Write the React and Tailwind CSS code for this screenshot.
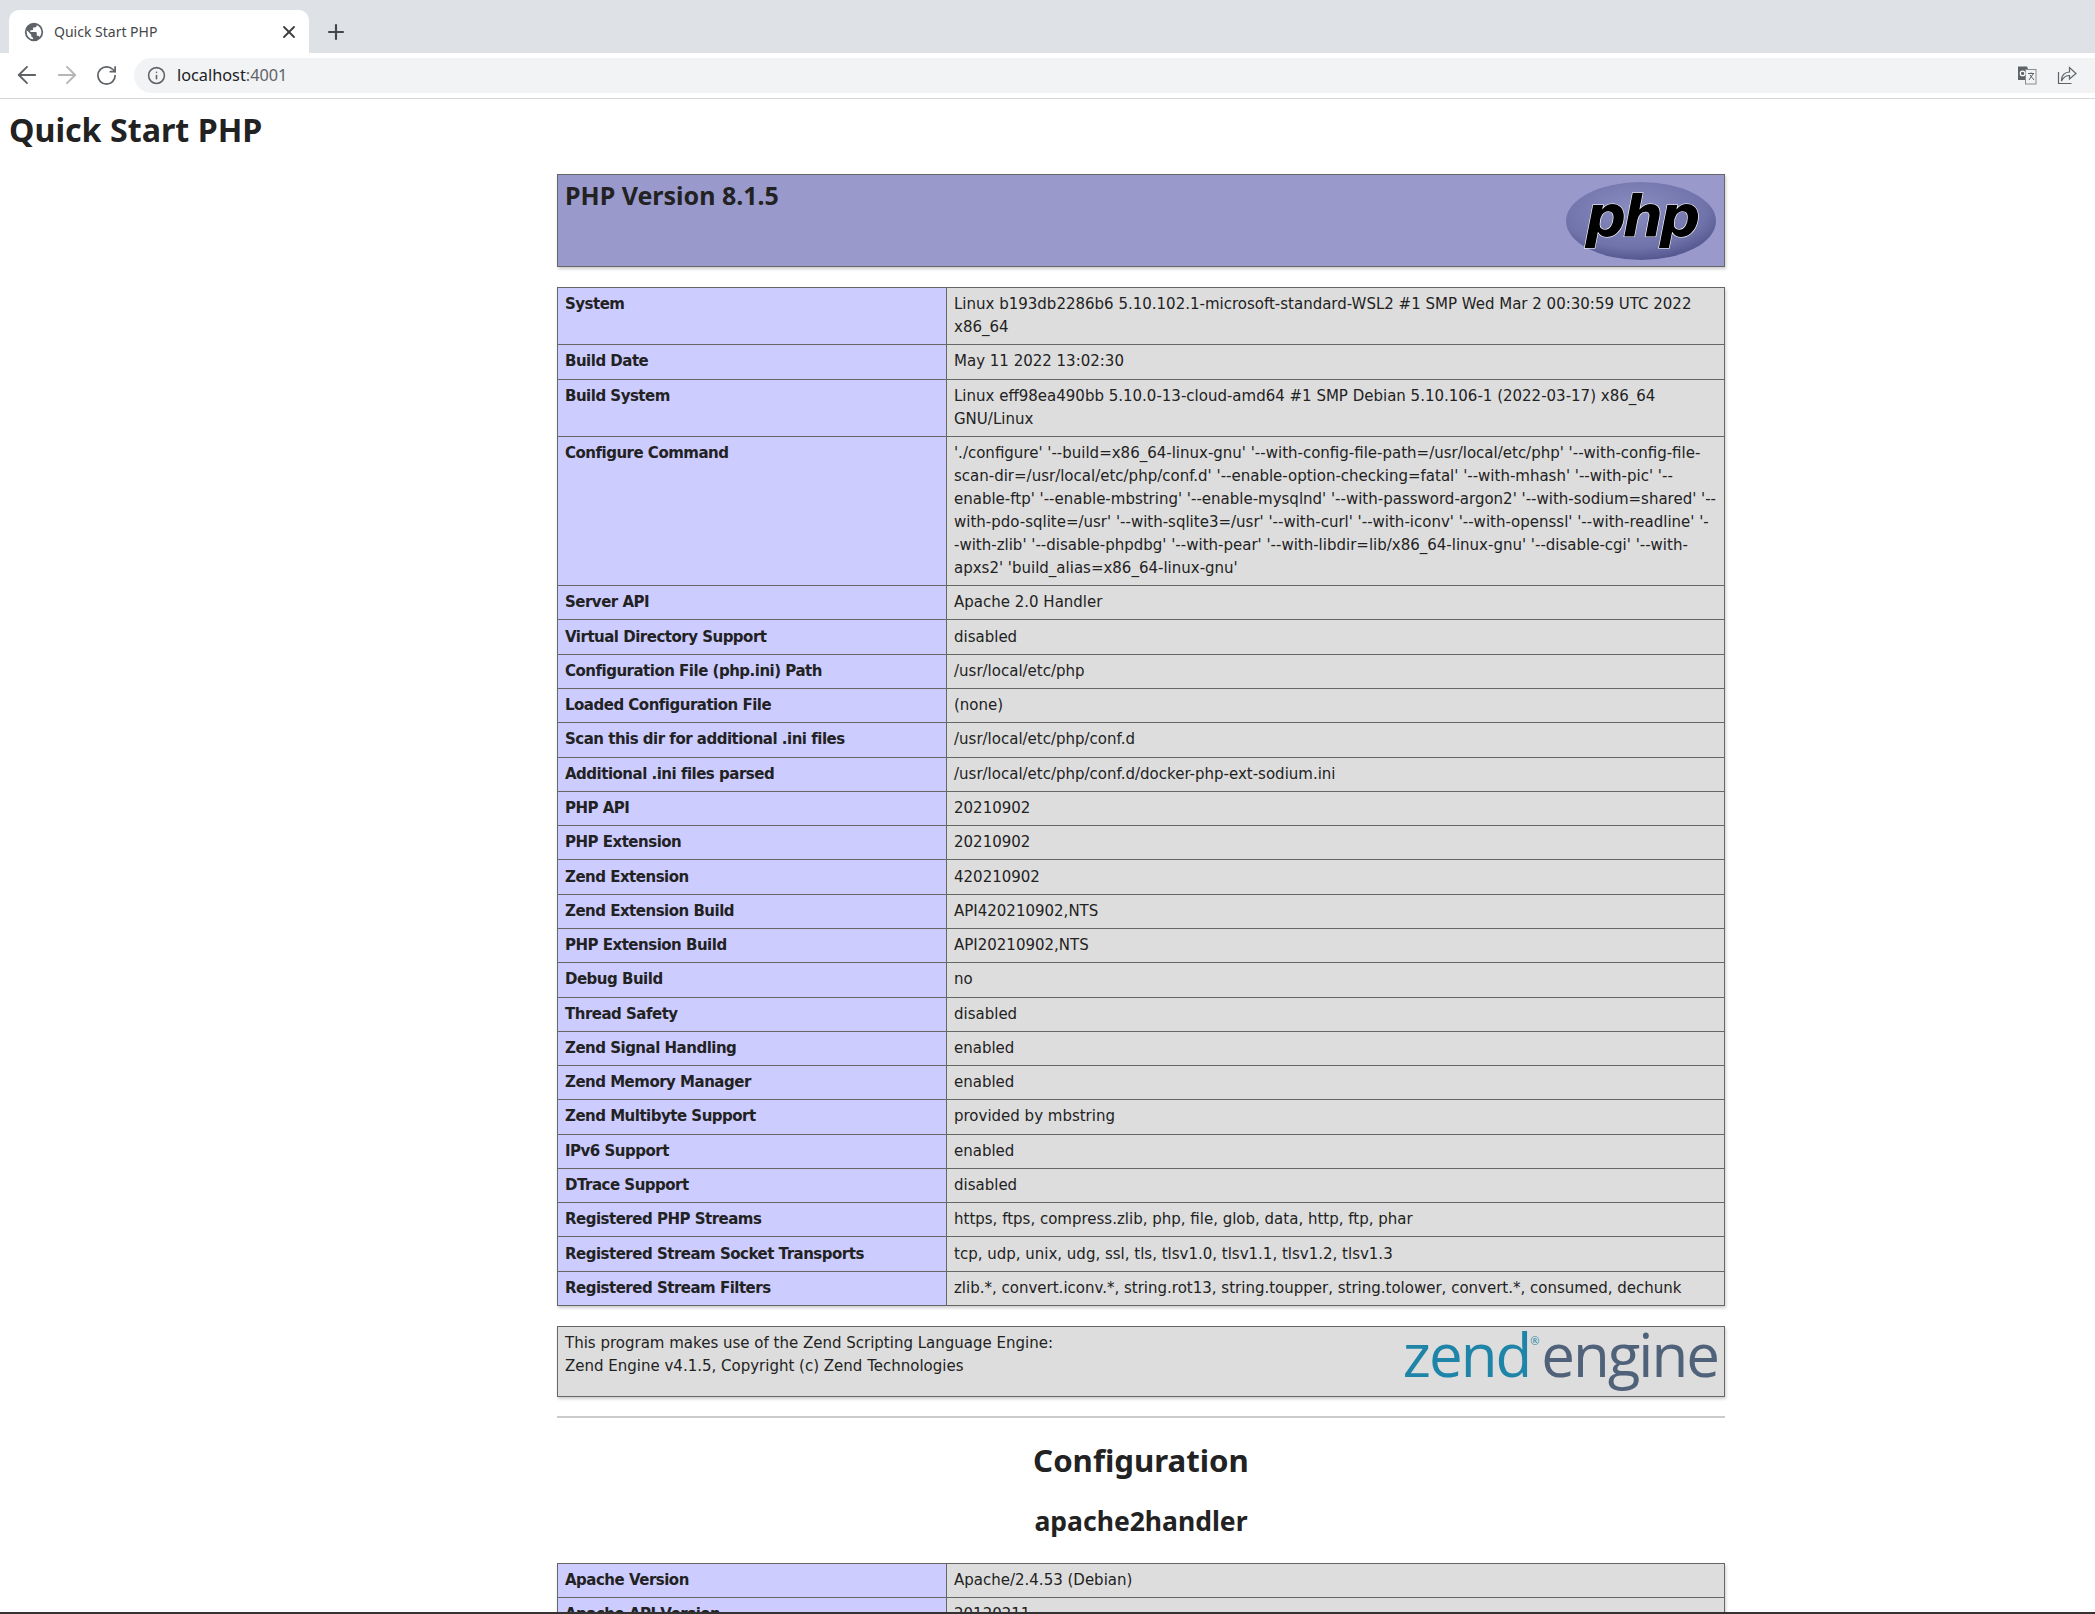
import React from 'react';
import { ArrowLeft, ArrowRight, RotateCw, Info, Plus, X } from 'lucide-react';

const mainRows = [
  ['System', ['Linux b193db2286b6 5.10.102.1-microsoft-standard-WSL2 #1 SMP Wed Mar 2 00:30:59 UTC 2022', 'x86_64']],
  ['Build Date', ['May 11 2022 13:02:30']],
  ['Build System', ['Linux eff98ea490bb 5.10.0-13-cloud-amd64 #1 SMP Debian 5.10.106-1 (2022-03-17) x86_64', 'GNU/Linux']],
  ['Configure Command', [
    "'./configure' '--build=x86_64-linux-gnu' '--with-config-file-path=/usr/local/etc/php' '--with-config-file-",
    "scan-dir=/usr/local/etc/php/conf.d' '--enable-option-checking=fatal' '--with-mhash' '--with-pic' '--",
    "enable-ftp' '--enable-mbstring' '--enable-mysqlnd' '--with-password-argon2' '--with-sodium=shared' '--",
    "with-pdo-sqlite=/usr' '--with-sqlite3=/usr' '--with-curl' '--with-iconv' '--with-openssl' '--with-readline' '-",
    "-with-zlib' '--disable-phpdbg' '--with-pear' '--with-libdir=lib/x86_64-linux-gnu' '--disable-cgi' '--with-",
    "apxs2' 'build_alias=x86_64-linux-gnu'",
  ]],
  ['Server API', ['Apache 2.0 Handler']],
  ['Virtual Directory Support', ['disabled']],
  ['Configuration File (php.ini) Path', ['/usr/local/etc/php']],
  ['Loaded Configuration File', ['(none)']],
  ['Scan this dir for additional .ini files', ['/usr/local/etc/php/conf.d']],
  ['Additional .ini files parsed', ['/usr/local/etc/php/conf.d/docker-php-ext-sodium.ini']],
  ['PHP API', ['20210902']],
  ['PHP Extension', ['20210902']],
  ['Zend Extension', ['420210902']],
  ['Zend Extension Build', ['API420210902,NTS']],
  ['PHP Extension Build', ['API20210902,NTS']],
  ['Debug Build', ['no']],
  ['Thread Safety', ['disabled']],
  ['Zend Signal Handling', ['enabled']],
  ['Zend Memory Manager', ['enabled']],
  ['Zend Multibyte Support', ['provided by mbstring']],
  ['IPv6 Support', ['enabled']],
  ['DTrace Support', ['disabled']],
  ['Registered PHP Streams', ['https, ftps, compress.zlib, php, file, glob, data, http, ftp, phar']],
  ['Registered Stream Socket Transports', ['tcp, udp, unix, udg, ssl, tls, tlsv1.0, tlsv1.1, tlsv1.2, tlsv1.3']],
  ['Registered Stream Filters', ['zlib.*, convert.iconv.*, string.rot13, string.toupper, string.tolower, convert.*, consumed, dechunk']],
];

const apacheRows = [
  ['Apache Version', ['Apache/2.4.53 (Debian)']],
  ['Apache API Version', ['20120211']],
];

const InfoTable = ({ rows }) => (
  <table className="w-[1168px] table-fixed border-collapse shadow-[1px_2px_3px_rgba(0,0,0,0.2)]">
    <colgroup>
      <col className="w-[389px]" />
      <col />
    </colgroup>
    <tbody>
      {rows.map(([label, lines]) => (
        <tr key={label}>
          <td className="border border-[#666] bg-[#ccf] py-[5.15px] pl-[7px] pr-[6px] align-top font-bold tracking-[-0.5px] whitespace-nowrap">{label}</td>
          <td className="border border-[#666] bg-[#ddd] py-[5.15px] pl-[7px] pr-[6px] align-top whitespace-nowrap">
            {lines.map((line) => <div key={line}>{line}</div>)}
          </td>
        </tr>
      ))}
    </tbody>
  </table>
);

const Toolbar = () => (
  <div className="font-['Noto_Sans',sans-serif]">
    <div className="flex h-[53px] items-end bg-[#dee1e6] pl-[9px]">
      <div className="flex h-[43px] w-[300px] items-center rounded-t-[10px] bg-white pl-[14px] pr-[10px]">
        <svg width="22" height="22" viewBox="0 0 24 24" className="shrink-0">
          <path fill="#5f6368" d="M12 2a10 10 0 1 0 0 20 10 10 0 0 0 0-20zM4 12c0-.6.1-1.2.2-1.8L9 15v1c0 1.1.9 2 2 2v2a8 8 0 0 1-7-8zm13.9 5.4c-.3-.8-1-1.4-1.9-1.4h-1v-3c0-.6-.4-1-1-1H8v-2h2c.6 0 1-.4 1-1V7h2c1.1 0 2-.9 2-2v-.4a8 8 0 0 1 2.9 12.8z" />
        </svg>
        <span className="ml-[9px] flex-1 text-[14px] text-[#45474a]">Quick Start PHP</span>
        <X size={20} strokeWidth={2.2} className="text-[#3c4043]" />
      </div>
      <div className="mb-[9px] ml-[15px] flex h-[24px] items-center">
        <Plus size={24} strokeWidth={2.2} className="text-[#45474a]" />
      </div>
    </div>
    <div className="flex h-[46px] items-center border-b border-[#d8d8d8] bg-white pb-px">
      <ArrowLeft size={28} strokeWidth={1.6} className="ml-[13px] text-[#5f6368]" />
      <ArrowRight size={28} strokeWidth={1.6} className="ml-[12px] text-[#b4b6b8]" />
      <RotateCw size={23} strokeWidth={1.8} className="ml-[13.5px] text-[#5f6368]" />
      <div className="ml-[16.5px] flex h-[35px] flex-1 items-center rounded-l-full bg-[#f1f3f4] pl-[12.5px]">
        <Info size={19} strokeWidth={2} className="text-[#5f6368]" />
        <span className="ml-[11.5px] flex-1 text-[16.3px] text-[#202124]">localhost<span className="text-[#5f6368]">:4001</span></span>
        <svg width="20" height="20" viewBox="0 0 20 20" className="mr-[20px] shrink-0">
          <path d="M1 1.5h9l1 2.5v11H1.5a.5.5 0 0 1-.5-.5z" fill="#5f6368" />
          <rect x="8.500" y="4.500" width="10.500" height="14.500" fill="#f1f3f4" stroke="#8a8d90" />
          <circle cx="5.600" cy="8.400" r="2.300" fill="none" stroke="#fff" strokeWidth="1.200" />
          <path d="M11 8.500h6M14 7.500v1M12 15l4-6M13 10l4 5" stroke="#5f6368" fill="none" />
        </svg>
        <svg width="20" height="20" viewBox="0 0 20 20" className="mr-[18px] shrink-0" fill="none" stroke="#5f6368" strokeWidth="1.2">
          <path d="M1.500 7v11.500h13" />
          <path d="M4.500 15.500c0-5 3-8.500 8-8.500V2.500l6.500 6-6.500 5.500v-3.500c-3 0-6 1.500-8 5.500z" />
        </svg>
      </div>
    </div>
  </div>
);

const PhpLogo = () => (
  <svg width="152" height="80" viewBox="0 0 152 80" className="shrink-0">
    <defs>
      <radialGradient id="phpGlow" cx="45%" cy="35%" r="70%">
        <stop offset="0%" stopColor="#8a8dc0" />
        <stop offset="70%" stopColor="#6f73aa" />
        <stop offset="100%" stopColor="#4d5088" />
      </radialGradient>
    </defs>
    <ellipse cx="76" cy="40" rx="75" ry="39" fill="url(#phpGlow)" />
    <text x="76" y="55" textAnchor="middle" fontFamily="'DejaVu Sans',sans-serif" fontSize="57" fontWeight="700" fontStyle="italic" fill="#000" stroke="#fff" strokeWidth="1.2" paintOrder="stroke" letterSpacing="-3.5">php</text>
  </svg>
);

const ZendLogo = () => (
  <div className="-mt-[10px] flex items-start font-['Open_Sans',sans-serif] text-[60px] leading-[64px] tracking-[-2px]">
    <span className="text-[#1e84a8]">zend</span>
    <span className="mt-[14px] text-[11px] leading-[10px] tracking-normal text-[#1e84a8]">®</span>
    <span className="ml-[2px] text-[#50627a]">engine</span>
  </div>
);

export default function App() {
  return (
    <div className="h-[1614px] overflow-hidden border-b-2 border-[#333] bg-white text-[#222]">
      <Toolbar />
      <div className="font-['DejaVu_Sans',sans-serif] text-[15px] leading-[23px]">
        <h1 className="pl-[9px] pt-[8.5px] font-['Noto_Sans',sans-serif] text-[32.2px] leading-[44px] font-bold">Quick Start PHP</h1>
        <div className="mt-[22.500px] ml-[557px] w-[1168px]">
          <div className="flex h-[93px] justify-between border border-[#666] bg-[#99c] pl-[7px] pr-[7px] pt-[5.500px] shadow-[1px_2px_3px_rgba(0,0,0,0.2)]">
            <h2 className="-mt-[3px] font-['Noto_Sans',sans-serif] text-[25px] leading-[34px] font-bold">PHP Version 8.1.5</h2>
            <PhpLogo />
          </div>
          <div className="mt-[20px]">
            <InfoTable rows={mainRows} />
          </div>
          <div className="mt-[20px] flex h-[71px] justify-between border border-[#666] bg-[#ddd] pl-[7px] pr-[6px] pt-[5px] shadow-[1px_2px_3px_rgba(0,0,0,0.2)]">
            <div className="whitespace-nowrap">
              <div>This program makes use of the Zend Scripting Language Engine:</div>
              <div>Zend Engine v4.1.5, Copyright (c) Zend Technologies</div>
            </div>
            <ZendLogo />
          </div>
          <hr className="mt-[19px] h-[2px] border-0 bg-[#ccc]" />
          <h2 className="mt-[19.500px] text-center font-['Noto_Sans',sans-serif] text-[31.2px] leading-[44px] font-bold">Configuration</h2>
          <h2 className="mt-[21.500px] text-center font-['Noto_Sans',sans-serif] text-[26.5px] leading-[36px] font-bold">apache2handler</h2>
          <div className="mt-[24px]">
            <InfoTable rows={apacheRows} />
          </div>
        </div>
      </div>
    </div>
  );
}
